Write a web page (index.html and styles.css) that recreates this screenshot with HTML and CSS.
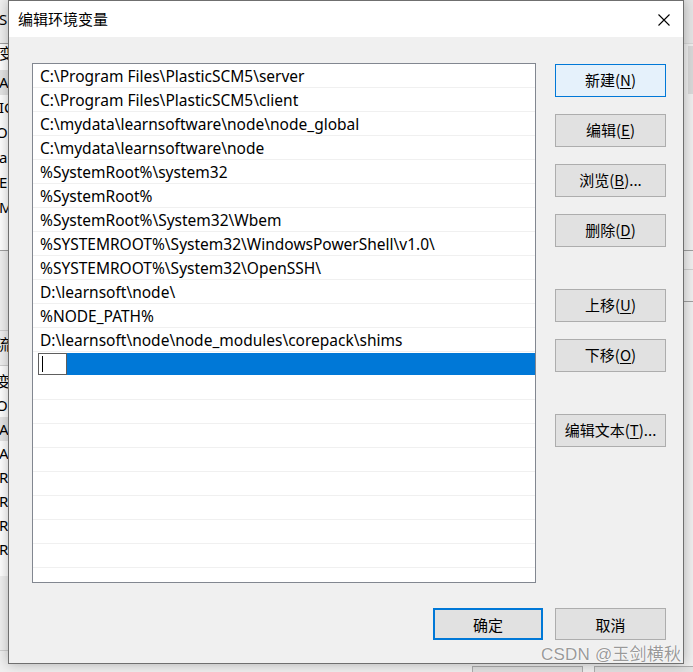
FILE: index.html
```html
<!DOCTYPE html>
<html lang="zh-CN">
<head>
<meta charset="utf-8">
<title>编辑环境变量</title>
<link rel="stylesheet" href="styles.css">
</head>
<body>
<div class="desk">
  <div class="bg-left">
    <div class="bl-top"><span>S</span></div>
    <div class="bl-rows">
      <div class="bl-row cut"><span>变</span></div>
      <div class="bl-row hl"><span>A</span></div>
      <div class="bl-row"><span>IC</span></div>
      <div class="bl-row"><span class="shift">Or</span></div>
      <div class="bl-row"><span>a</span></div>
      <div class="bl-row"><span>E</span></div>
      <div class="bl-row"><span>M</span></div>
    </div>
    <div class="bl-gap"></div>
    <div class="bl-mid"><span class="shift">流</span></div>
    <div class="bl-rows2">
      <div class="bl-row2"><span class="shift">变</span></div>
      <div class="bl-row2"><span class="shift">OS</span></div>
      <div class="bl-row2 hl"><span>A</span></div>
      <div class="bl-row2"><span>A</span></div>
      <div class="bl-row2"><span>R</span></div>
      <div class="bl-row2"><span>R</span></div>
      <div class="bl-row2"><span>R</span></div>
      <div class="bl-row2"><span>R</span></div>
    </div>
    <div class="bl-bottom"></div>
  </div>

  <div class="bg-right">
    <div class="br-top"></div>
    <div class="br-scroll"><div class="br-thumb"></div></div>
    <div class="br-sep1"></div>
    <div class="br-band"></div>
    <div class="br-rest"></div>
  </div>

  <div class="bg-bottom">
    <div class="bb-btn"></div>
    <div class="bb-btn"></div>
  </div>

  <div class="dialog">
    <div class="titlebar">
      <span class="title">编辑环境变量</span>
      <svg class="close" width="12" height="12" viewBox="0 0 12 12" aria-hidden="true">
        <path d="M0.5 0.5 L11.5 11.5 M11.5 0.5 L0.5 11.5" stroke="#000" stroke-width="1.1" fill="none"/>
      </svg>
    </div>
    <div class="content">
      <div class="main">
        <div class="list">
          <div class="row">C:\Program Files\PlasticSCM5\server</div>
          <div class="row">C:\Program Files\PlasticSCM5\client</div>
          <div class="row">C:\mydata\learnsoftware\node\node_global</div>
          <div class="row">C:\mydata\learnsoftware\node</div>
          <div class="row">%SystemRoot%\system32</div>
          <div class="row">%SystemRoot%</div>
          <div class="row">%SystemRoot%\System32\Wbem</div>
          <div class="row">%SYSTEMROOT%\System32\WindowsPowerShell\v1.0\</div>
          <div class="row">%SYSTEMROOT%\System32\OpenSSH\</div>
          <div class="row">D:\learnsoft\node\</div>
          <div class="row">%NODE_PATH%</div>
          <div class="row">D:\learnsoft\node\node_modules\corepack\shims</div>
          <div class="row sel"><span class="edit"><span class="caret"></span></span><span class="selfill"></span></div>
          <div class="row"></div>
          <div class="row"></div>
          <div class="row"></div>
          <div class="row"></div>
          <div class="row"></div>
          <div class="row"></div>
          <div class="row"></div>
          <div class="row"></div>
          <div class="row last"></div>
        </div>
        <div class="btns">
          <div class="group">
            <button class="btn default">新建(<u>N</u>)</button>
            <button class="btn">编辑(<u>E</u>)</button>
            <button class="btn">浏览(<u>B</u>)...</button>
            <button class="btn">删除(<u>D</u>)</button>
          </div>
          <div class="group">
            <button class="btn">上移(<u>U</u>)</button>
            <button class="btn">下移(<u>O</u>)</button>
          </div>
          <div class="group">
            <button class="btn">编辑文本(<u>T</u>)...</button>
          </div>
        </div>
      </div>
      <div class="footer">
        <button class="btn fbtn ok">确定</button>
        <button class="btn fbtn cancel">取消</button>
      </div>
    </div>
  </div>

  <div class="watermark">CSDN @玉剑横秋</div>
</div>
</body>
</html>
```

FILE: styles.css
```css
* { box-sizing: border-box; }

html, body {
  margin: 0;
  padding: 0;
}

body {
  width: 693px;
  height: 672px;
  overflow: hidden;
  background: #f0f0f0;
  font-family: "Noto Sans", "Noto Sans CJK SC", sans-serif;
  font-size: 15px;
  color: #000;
}

.desk {
  position: relative;
  width: 693px;
  height: 672px;
  overflow: hidden;
  background: #f0f0f0;
}

/* ---------- background window, left strip ---------- */
.bg-left {
  position: absolute;
  left: 0;
  top: 0;
  width: 8px;
  height: 672px;
  overflow: hidden;
  display: flex;
  flex-direction: column;
  background: #f0f0f0;
  white-space: nowrap;
  line-height: 1;
}
.bg-left span { display: block; margin-left: -1px; }
.bg-left .shift { margin-left: -4px; }
.bl-top {
  height: 44px;
  border-bottom: 1px solid #a0a0a0;
  display: flex;
  align-items: center;
  padding-bottom: 4px;
  background: #f0f0f0;
}
.bl-rows { background: #fff; padding-top: 1px; height: 206px; }
.bl-row { height: 25px; display: flex; align-items: center; }
.bl-row.cut span { margin-top: -8px; }
.bl-row.hl { background: #e5e5e5; }
.bl-gap {
  height: 81px;
  border-top: 1px solid #a0a0a0;
  border-bottom: 1px solid #d0d0d0;
  background: #f0f0f0;
}
.bl-mid {
  height: 35px;
  border-bottom: 1px solid #d0d0d0;
  display: flex;
  align-items: center;
  background: #f0f0f0;
  padding-bottom: 8px;
}
.bl-rows2 { background: #fff; padding-top: 3px; height: 210px; }
.bl-row2 { height: 24px; display: flex; align-items: center; }
.bl-row2.hl { background: #e5e5e5; }
.bl-bottom {
  height: 75px;
  border-bottom: 1px solid #d0d0d0;
  background: #f0f0f0;
}

/* ---------- background window, right strip ---------- */
.bg-right {
  position: absolute;
  left: 684px;
  top: 0;
  width: 9px;
  height: 672px;
  display: flex;
  flex-direction: column;
  background: #f0f0f0;
}
.br-top { height: 44px; background: #e6e6e6; border-bottom: 1px solid #d8d8d8; }
.br-scroll { height: 206px; display: flex; justify-content: flex-end; padding-top: 2px; }
.br-thumb { width: 5px; height: 48px; background: #dadada; }
.br-sep1 { height: 20px; border-top: 1px solid #a0a0a0; border-bottom: 1px solid #d0d0d0; }
.br-band { height: 32px; border-bottom: 1px solid #a0a0a0; background: #f0f0f0; }
.br-rest { flex: 1; background: #f0f0f0; }

/* ---------- background window, bottom strip ---------- */
.bg-bottom {
  position: absolute;
  left: 472px;
  top: 666px;
  display: flex;
  gap: 11px;
}
.bb-btn {
  width: 111px;
  height: 12px;
  border: 1px solid #adadad;
  background: #e1e1e1;
}

/* ---------- dialog ---------- */
.dialog {
  position: absolute;
  left: 8px;
  top: 0;
  width: 676px;
  height: 664px;
  border: 1px solid #6f6f6f;
  background: #f0f0f0;
  box-shadow: 0 0 12px rgba(0, 0, 0, 0.28);
  display: flex;
  flex-direction: column;
}

.titlebar {
  height: 36px;
  background: #fff;
  display: flex;
  align-items: center;
  justify-content: space-between;
  padding: 0 13px 0 9px;
}
.title {
  font-family: "Noto Sans CJK SC", sans-serif;
  font-size: 15px;
  color: #000;
  padding-bottom: 1px;
}
.close { display: block; margin-top: 1px; }

.content {
  padding: 26px 17px 0 23px;
  display: flex;
  flex-direction: column;
}

.main {
  display: flex;
  gap: 19px;
}

.list {
  width: 504px;
  height: 520px;
  border: 1px solid #828790;
  background: #fff;
  overflow: hidden;
  display: flex;
  flex-direction: column;
}

.row {
  flex: 0 0 24px;
  height: 24px;
  border-bottom: 1px solid #f0f0f0;
  padding-left: 7px;
  padding-top: 3px;
  display: flex;
  align-items: center;
  white-space: nowrap;
  font-family: "Noto Sans", "Noto Sans CJK SC", sans-serif;
  font-size: 15.5px;
  color: #000;
  line-height: 1;
}

.row.sel {
  padding-left: 5px;
  padding-top: 1px;
  border-bottom-color: #fff;
  align-items: stretch;
}
.edit {
  width: 29px;
  border: 1px solid #5e5e5e;
  background: #fff;
  display: flex;
  align-items: center;
  padding-left: 3px;
}
.caret {
  width: 1px;
  height: 16px;
  background: #000;
}
.selfill {
  flex: 1;
  background: #0078d7;
}

.btns {
  width: 111px;
  display: flex;
  flex-direction: column;
  gap: 42px;
  padding-top: 1px;
}
.group {
  display: flex;
  flex-direction: column;
  gap: 17px;
}

.btn {
  width: 111px;
  height: 33px;
  border: 1px solid #adadad;
  background: #e1e1e1;
  font-family: "Noto Sans CJK SC", sans-serif;
  font-size: 15px;
  color: #000;
  padding: 0 0 3px;
  margin: 0;
  display: flex;
  align-items: center;
  justify-content: center;
  line-height: 1;
}
.btn u {
  text-decoration: underline;
  text-underline-offset: 2px;
  text-decoration-thickness: 1px;
}
.btn.default {
  border-color: #0078d7;
  background: #e5f1fb;
}

.footer {
  margin-top: 25px;
  display: flex;
  justify-content: flex-end;
  gap: 12px;
}
.fbtn { height: 32px; padding: 0; }
.fbtn.ok {
  width: 110px;
  border: 2px solid #0078d7;
}
.fbtn.cancel { width: 111px; }

/* ---------- watermark overlay ---------- */
.watermark {
  position: absolute;
  left: 541px;
  top: 640px;
  font-family: "Liberation Sans", "Noto Sans CJK SC", sans-serif;
  font-size: 17px;
  color: rgba(120, 120, 120, 0.75);
  text-shadow: 0 0 1px #fff, 0 0 2px rgba(255, 255, 255, 0.9);
  white-space: nowrap;
  letter-spacing: 0.2px;
}
```
